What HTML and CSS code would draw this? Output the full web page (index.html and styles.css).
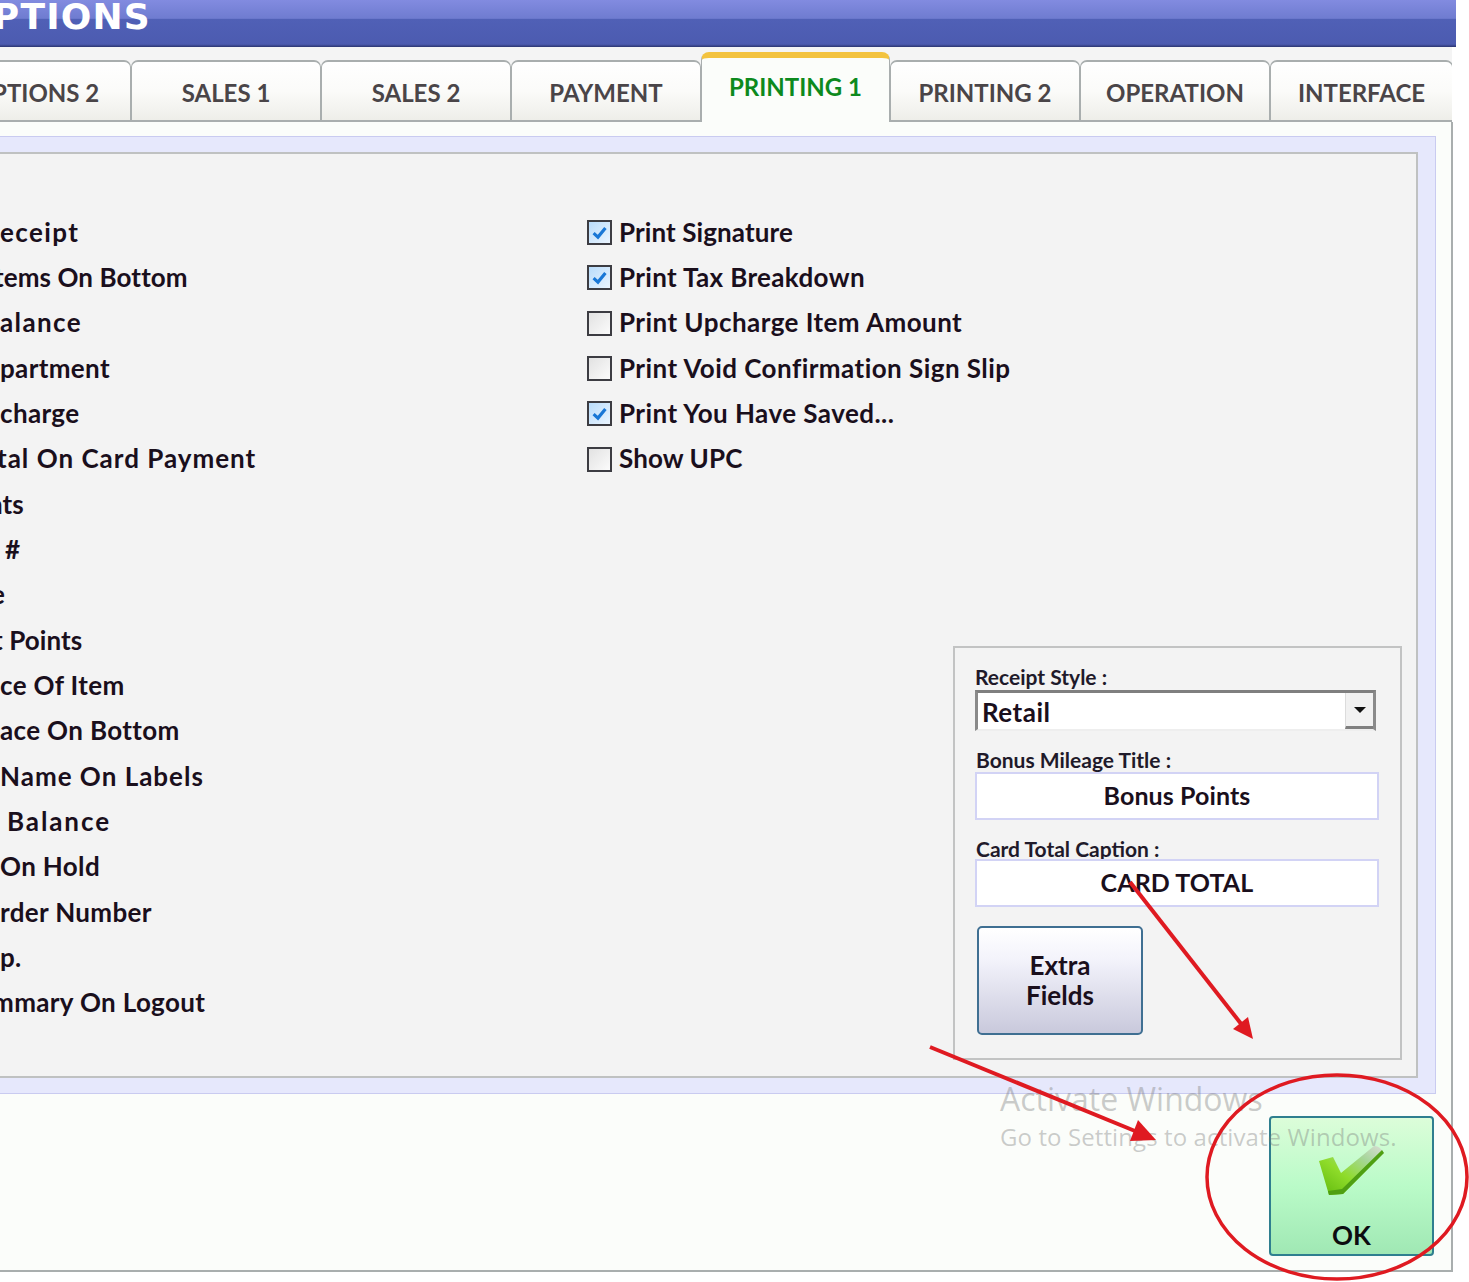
FILE: index.html
```html
<!DOCTYPE html>
<html lang="en">
<head>
<meta charset="utf-8">
<title>Options</title>
<link rel="stylesheet" href="styles.css">
</head>
<body>
<div class="page">
  <div class="window">
    <header class="titlebar"><span class="title">OPTIONS</span></header>
    <nav class="tabs">
      <div class="tab">OPTIONS 2</div>
      <div class="tab">SALES 1</div>
      <div class="tab">SALES 2</div>
      <div class="tab">PAYMENT</div>
      <div class="tab active">PRINTING 1</div>
      <div class="tab">PRINTING 2</div>
      <div class="tab">OPERATION</div>
      <div class="tab">INTERFACE</div>
    </nav>
    <main class="sheet">
      <div class="lavender">
        <div class="panel">
          <div class="col-left">
            <div class="row"><span class="label wide">eceipt</span></div>
            <div class="row"><span class="label cut-6 tight">tems On Bottom</span></div>
            <div class="row"><span class="label wide">alance</span></div>
            <div class="row"><span class="label">partment</span></div>
            <div class="row"><span class="label">charge</span></div>
            <div class="row"><span class="label cut-3 airy">tal On Card Payment</span></div>
            <div class="row"><span class="label cut-12 tight">nts</span></div>
            <div class="row"><span class="label hash">#</span></div>
            <div class="row"><span class="label cut-9">e</span></div>
            <div class="row"><span class="label cut-7 tight">t Points</span></div>
            <div class="row"><span class="label">ce Of Item</span></div>
            <div class="row"><span class="label">ace On Bottom</span></div>
            <div class="row"><span class="label airy">Name On Labels</span></div>
            <div class="row"><span class="label bal">Balance</span></div>
            <div class="row"><span class="label">On Hold</span></div>
            <div class="row"><span class="label">rder Number</span></div>
            <div class="row"><span class="label">p.</span></div>
            <div class="row"><span class="label cut-8">mmary On Logout</span></div>
          </div>
          <div class="col-mid">
            <div class="row"><span class="check on"><svg viewBox="0 0 16 16" class="tick"><path d="M3.5 8.5 L6.8 11.5 L12.5 4.5"/></svg></span><span class="label tight">Print Signature</span></div>
            <div class="row"><span class="check on"><svg viewBox="0 0 16 16" class="tick"><path d="M3.5 8.5 L6.8 11.5 L12.5 4.5"/></svg></span><span class="label">Print Tax Breakdown</span></div>
            <div class="row"><span class="check"></span><span class="label mild">Print Upcharge Item Amount</span></div>
            <div class="row"><span class="check"></span><span class="label mild">Print Void Confirmation Sign Slip</span></div>
            <div class="row"><span class="check on"><svg viewBox="0 0 16 16" class="tick"><path d="M3.5 8.5 L6.8 11.5 L12.5 4.5"/></svg></span><span class="label mild">Print You Have Saved...</span></div>
            <div class="row"><span class="check"></span><span class="label tight">Show UPC</span></div>
          </div>
          <section class="group">
            <div class="cap">Receipt Style :</div>
            <div class="select"><span class="select-value">Retail</span><span class="select-btn"><span class="caret"></span></span></div>
            <div class="cap cap-gap">Bonus Mileage Title :</div>
            <div class="field">Bonus Points</div>
            <div class="cap cap-gap cap-tight">Card Total Caption :</div>
            <div class="field">CARD TOTAL</div>
            <div class="extra">Extra<br>Fields</div>
          </section>
        </div>
      </div>
      <div class="footer">
        <div class="ok">
          <svg class="ok-icon" viewBox="1316 1145 70 54">
            <defs>
              <linearGradient id="tickfill" x1="0" y1="1" x2="1" y2="0">
                <stop offset="0" stop-color="#5fb80c"/>
                <stop offset="0.4" stop-color="#8fdc2a"/>
                <stop offset="0.72" stop-color="#a6d69a"/>
                <stop offset="1" stop-color="#dcdcd8"/>
              </linearGradient>
            </defs>
            <path d="M1318 1162 L1332 1158 L1340 1174 L1373 1147 Q1378 1146 1383 1154 L1342 1195 L1328 1196 Z" fill="url(#tickfill)"/>
            <path d="M1328 1196 L1342 1195 L1383 1154 L1381 1151 L1341 1190 L1327 1192 Z" fill="#4f9f12"/>
          </svg>
          <span class="ok-text">OK</span>
        </div>
      </div>
    </main>
  </div>
  <div class="watermark">
    <div class="wm-big">Activate Windows</div>
    <div class="wm-small">Go to Settings to activate Windows.</div>
  </div>
  <svg class="marks" viewBox="0 0 1469 1282">
    <path class="red-line" d="M1130 882 L1242 1025"/>
    <path class="red-fill" d="M1253 1039 L1233 1029 L1248 1017 Z"/>
    <path class="red-line" d="M930 1047 L1135 1131"/>
    <path class="red-fill" d="M1156 1140 L1130 1141 L1138 1120 Z"/>
    <ellipse class="red-line thin" cx="1337" cy="1177" rx="130" ry="102"/>
  </svg>
</div>
</body>
</html>
```

FILE: styles.css
```css
* { box-sizing: border-box; }
html, body { margin: 0; padding: 0; background: #fff; }
.page {
  position: relative;
  width: 1469px;
  height: 1282px;
  overflow: hidden;
  font-family: "Lato", "Liberation Sans", sans-serif;
  font-weight: 700;
  color: #1a0f1c;
}
.window {
  width: 1456px;
  height: 1272px;
  display: flex;
  flex-direction: column;
}
.titlebar {
  height: 47px;
  flex: none;
  background: linear-gradient(#828be0 0, #6f7cd0 39%, #5060b6 41%, #4c5bb0 94%, #2b3570 100%);
  overflow: hidden;
}
.title {
  display: block;
  margin: -8px 0 0 -39px;
  font-family: "DejaVu Sans", sans-serif;
  font-size: 36px;
  line-height: 50px;
  font-weight: 700;
  color: #fff;
  letter-spacing: 1.2px;
}
.tabs {
  display: flex;
  align-items: flex-end;
  height: 75px;
  flex: none;
  width: 1452px;
  background: #f4f4f4;
  overflow: hidden;
}
.tab {
  flex: none;
  width: 190px;
  height: 62px;
  padding-top: 3px;
  display: flex;
  align-items: center;
  justify-content: center;
  border: 2px solid #a9aeae;
  border-left-width: 1px;
  border-right-width: 1px;
  border-radius: 7px 7px 0 0;
  background: linear-gradient(#ffffff, #fbfbf9 50%, #eeeee9);
  font-size: 24px;
  font-weight: 700;
  color: #4a4548;
}
.tab:first-child { margin-left: -59px; }
.tab.active {
  width: 189px;
  height: 70px;
  border-top: 6px solid #f3c33f;
  border-bottom: 0;
  border-radius: 8px 8px 0 0;
  background: #fbfdfa;
  color: #0d8a1d;
  padding: 0 0 8px;
}
.tab:last-child { width: 183px; }
.sheet {
  flex: 1;
  width: 1453px;
  background: #fbfdfa;
  border-right: 2px solid #a9aeae;
  border-bottom: 2px solid #a9aeae;
  padding: 14px 15px 0 0;
  display: flex;
  flex-direction: column;
}
.lavender {
  height: 958px;
  flex: none;
  background: #e6e8fc;
  border: 1px solid #c9cbf0;
  border-left: 0;
  padding: 15px 17px 15px 0;
}
.panel {
  height: 100%;
  background: #f3f3f3;
  border: 2px solid #bfc1c1;
  border-left: 0;
  display: flex;
  padding-right: 13px;
}
.col-left, .col-mid {
  flex: none;
  padding-top: 56px;
}
.col-left { width: 587px; }
.col-mid { width: 366px; }
.row {
  height: 45.33px;
  display: flex;
  align-items: center;
  gap: 7px;
}
.label {
  font-size: 26px;
  margin-top: -2px;
  white-space: nowrap;
  letter-spacing: 0.35px;
}
.wide { letter-spacing: 1.4px; }
.airy { letter-spacing: 1px; }
.mild { letter-spacing: 0.45px; }
.tight { letter-spacing: 0.1px; }
.cut-3 { margin-left: -3px; }
.cut-6 { margin-left: -6px; }
.cut-7 { margin-left: -7px; }
.cut-8 { margin-left: -8px; }
.cut-9 { margin-left: -9px; }
.cut-12 { margin-left: -12px; }
.hash { margin-left: 5px; }
.bal { margin-left: 7px; letter-spacing: 1.9px; }
.check {
  width: 25px;
  height: 25px;
  flex: none;
  border: 2px solid #3c3c42;
  background: linear-gradient(135deg, #e2e2e2, #fbfbfb);
  display: flex;
}
.check.on { background: linear-gradient(135deg, #b9dcfb, #eaf4fe); }
.tick { width: 100%; height: 100%; fill: none; stroke: #1977d6; stroke-width: 2.4; }
.group {
  width: 449px;
  height: 414px;
  flex: none;
  align-self: flex-end;
  margin-bottom: 16px;
  border: 2px solid #c2c3c3;
  padding: 17px 22px 0 20px;
  display: flex;
  flex-direction: column;
  align-items: flex-start;
}
.cap {
  font-size: 21px;
  line-height: 24px;
  height: 25px;
  color: #1f1a2a;
  white-space: nowrap;
}
.cap-gap { margin-top: 17px; padding-left: 1px; height: 24px; }
.cap-tight { height: 22px; }
.select {
  width: 401px;
  height: 41px;
  background: #fff;
  border-top: 3px solid #7f7f7f;
  border-left: 3px solid #8a8a8a;
  border-right: 3px solid #8a8a8a;
  border-bottom: 2px solid #eeeeee;
  display: flex;
  justify-content: space-between;
}
.select-value { font-size: 26px; line-height: 38px; padding-left: 4px; letter-spacing: 0.5px; }
.select-btn {
  width: 28px;
  background: #f1f1f1;
  border-bottom: 3px solid #7f7f7f;
  border-left: 1px solid #dcdcdc;
  display: flex;
  align-items: center;
  justify-content: center;
}
.caret {
  width: 0;
  height: 0;
  border-left: 6px solid transparent;
  border-right: 6px solid transparent;
  border-top: 6px solid #111;
}
.field {
  width: 404px;
  height: 48px;
  background: #fff;
  border: 2px solid #d2d3f5;
  font-size: 25px;
  line-height: 43px;
  text-align: center;
  letter-spacing: 0.1px;
}
.extra {
  width: 166px;
  height: 109px;
  margin: 19px 0 0 2px;
  padding-bottom: 2px;
  border: 2px solid #3f6f92;
  border-radius: 5px;
  background: linear-gradient(#ffffff, #f3f3fb 30%, #c9c9dc);
  font-size: 26px;
  line-height: 30px;
  display: flex;
  align-items: center;
  justify-content: center;
  text-align: center;
}
.footer {
  display: flex;
  justify-content: flex-end;
  padding-top: 22px;
  padding-right: 2px;
}
.ok {
  width: 165px;
  height: 140px;
  border: 2px solid #2f7f8f;
  border-radius: 4px;
  background: linear-gradient(#dcfdd9, #bafbc8 50%, #a0e8b4);
  display: flex;
  flex-direction: column;
  align-items: center;
}
.ok-icon { width: 70px; height: 54px; margin-top: 26px; }
.ok-text { font-size: 26px; line-height: 30px; margin-top: 22px; color: #0c0c10; }
.watermark {
  position: absolute;
  left: 1000px;
  top: 1077px;
  font-family: "Open Sans", sans-serif;
  font-weight: 400;
  color: rgba(120, 120, 120, 0.38);
  white-space: nowrap;
  pointer-events: none;
}
.wm-big { font-size: 32px; line-height: 44px; }
.wm-small { font-size: 24px; line-height: 31px; letter-spacing: 0.1px; }
.marks {
  position: absolute;
  left: 0;
  top: 0;
  width: 1469px;
  height: 1282px;
  pointer-events: none;
}
.red-line { fill: none; stroke: #df1a21; stroke-width: 4; }
.red-line.thin { stroke-width: 3.5; }
.red-fill { fill: #df1a21; }
```
